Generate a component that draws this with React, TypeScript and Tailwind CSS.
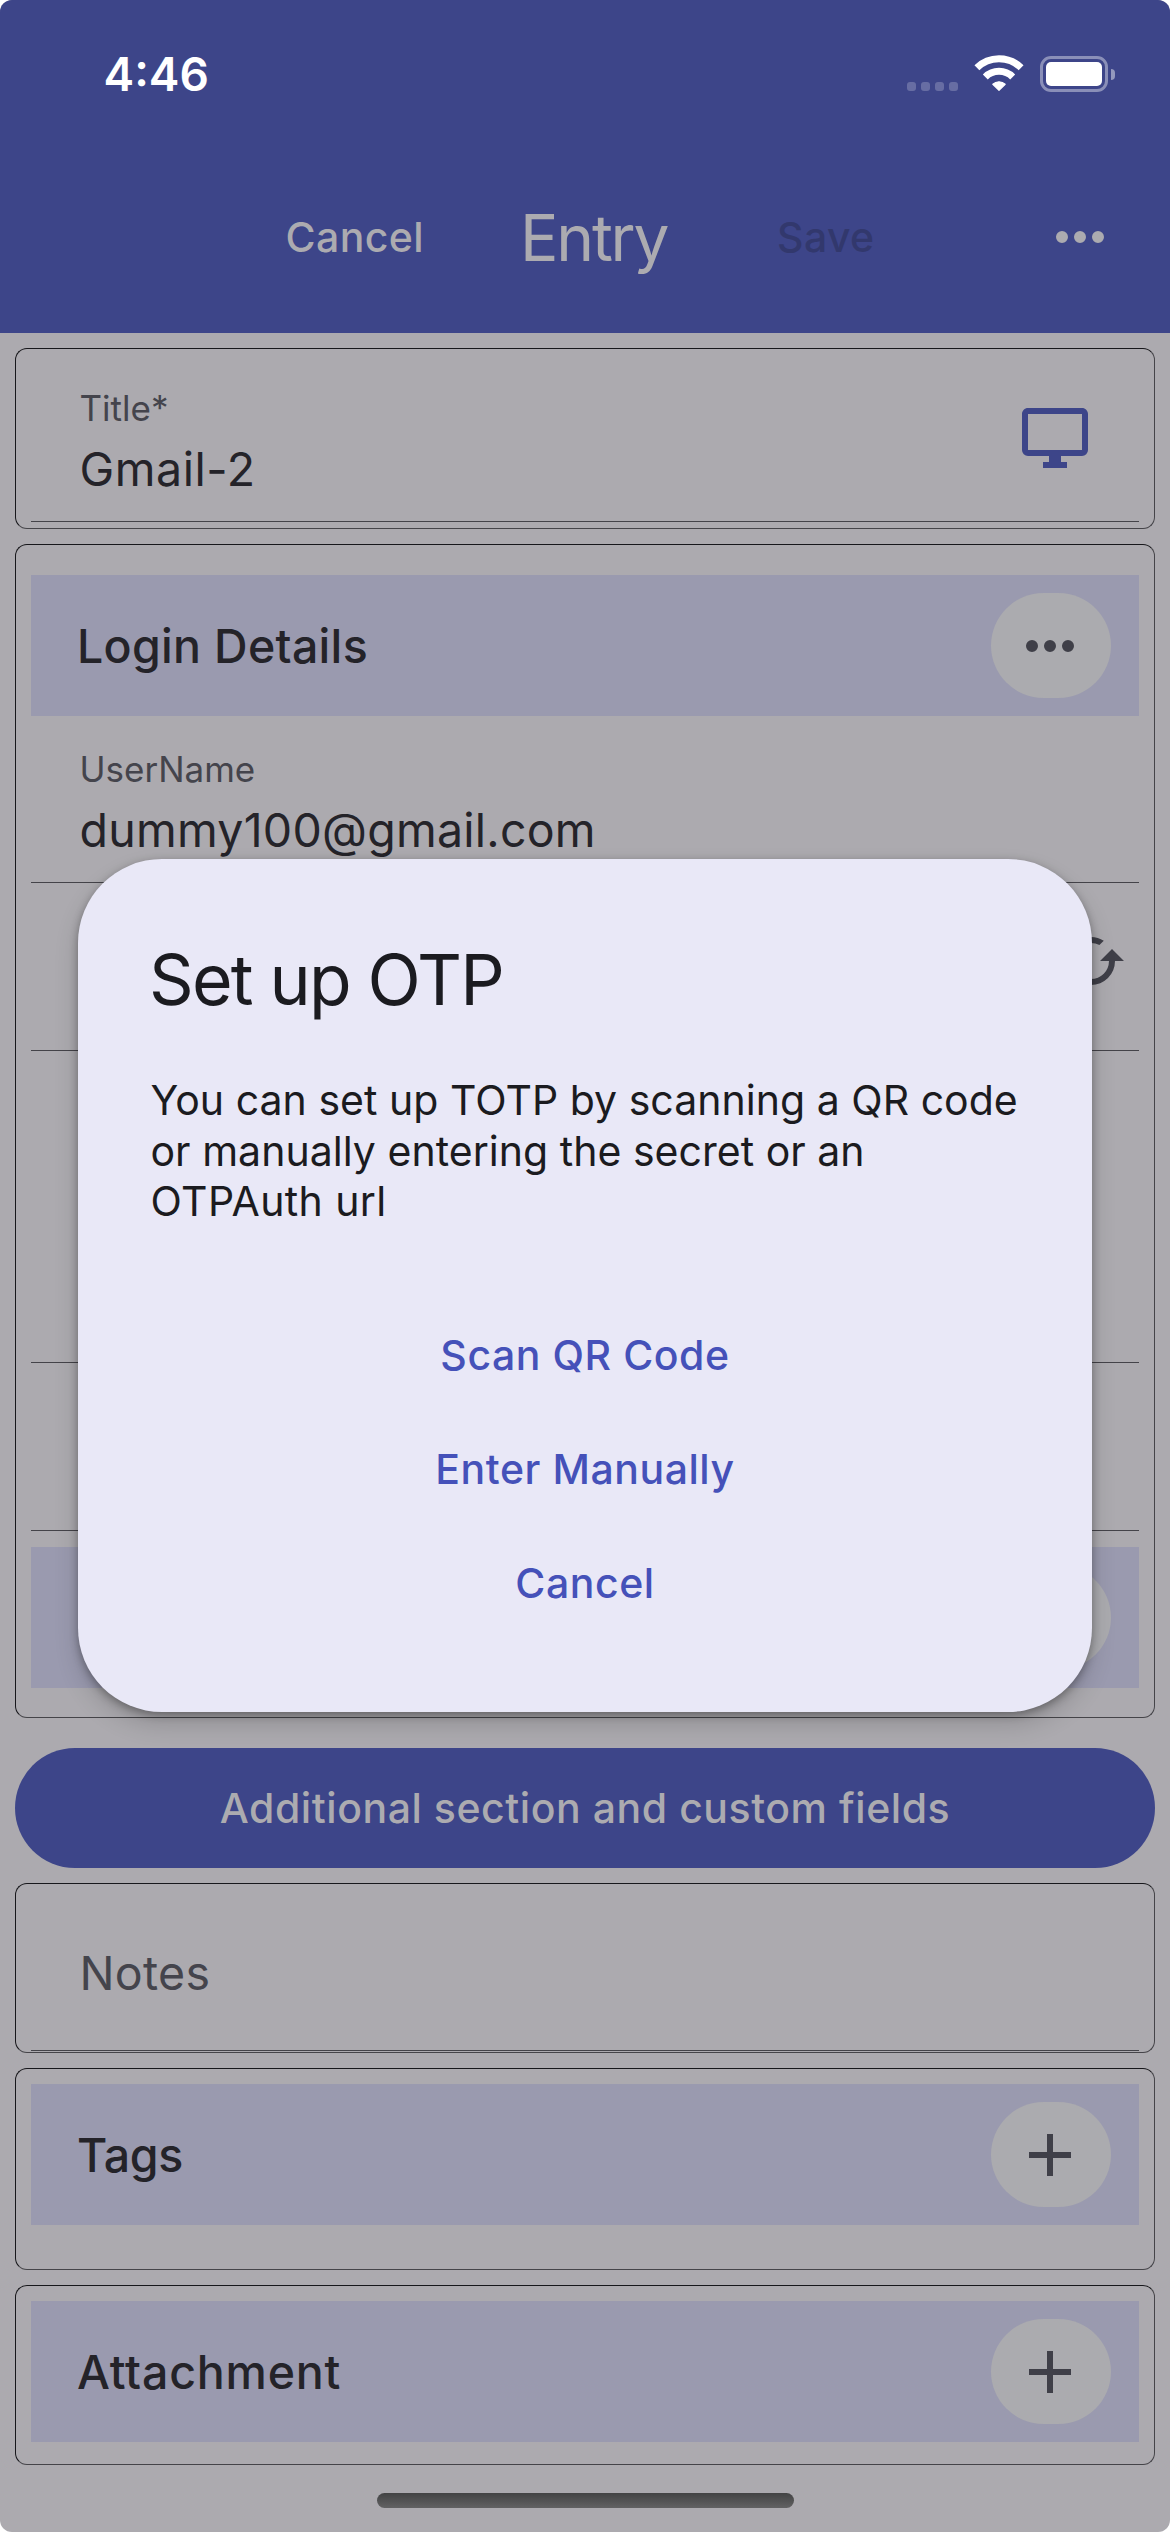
import type { ReactNode } from "react";

const PATHS = {
  dots: "M16,12A2,2 0 0,1 18,10A2,2 0 0,1 20,12A2,2 0 0,1 18,14A2,2 0 0,1 16,12M10,12A2,2 0 0,1 12,10A2,2 0 0,1 14,12A2,2 0 0,1 12,14A2,2 0 0,1 10,12M4,12A2,2 0 0,1 6,10A2,2 0 0,1 8,12A2,2 0 0,1 6,14A2,2 0 0,1 4,12Z",
  plus: "M19,13H13V19H11V13H5V11H11V5H13V11H19V13Z",
  monitor:
    "M21,16H3V4H21M21,2H3C1.89,2 1,2.89 1,4V16A2,2 0 0,0 3,18H10V20H8V22H16V20H14V18H21A2,2 0 0,0 23,16V4C23,2.89 22.1,2 21,2Z",
  cached:
    "M19,8L15,12H18A6,6 0 0,1 12,18C11,18 10.03,17.75 9.2,17.3L7.74,18.76C8.97,19.54 10.43,20 12,20A8,8 0 0,0 20,12H23M6,12A6,6 0 0,1 12,6C13,6 13.97,6.25 14.8,6.7L16.26,5.24C15.03,4.46 13.57,4 12,4A8,8 0 0,0 4,12H1L5,16L9,12",
};

function Icon({ name, className }: { name: keyof typeof PATHS; className: string }) {
  return (
    <svg viewBox="0 0 24 24" className={`size-[72px] shrink-0 ${className}`} fill="currentColor">
      <path d={PATHS[name]} />
    </svg>
  );
}

function StatusBar() {
  return (
    <div className="flex h-[141px] items-center pt-[7px] pr-[55px] pl-[103.5px] text-white">
      <span className="text-[46px] leading-[60px] font-semibold">4:46</span>
      <div className="ml-auto flex h-[38px] items-start">
        <div className="mt-[27px] mr-[17px] flex gap-[5px]">
          {[0, 1, 2, 3].map((i) => (
            <i key={i} className="size-[9px] rounded-[3px] bg-white/22" />
          ))}
        </div>
        <svg viewBox="0 0 48 36" className="mr-[17px] h-[36px] w-[48px] overflow-visible" fill="none" stroke="white">
          <path d="M1.9 12.7A31.6 31.6 0 0 1 46.1 12.7" strokeWidth="7" />
          <path d="M10.3 22A19.4 19.4 0 0 1 37.7 22" strokeWidth="7" />
          <path d="M17.8 29.2A9.2 9.2 0 0 1 30.2 29.2L24 35.3Z" fill="white" strokeWidth="1.2" strokeLinejoin="round" />
        </svg>
        <div className="mt-px h-[36px] w-[68px] rounded-[11px] border-[3px] border-white/40 p-[3px]">
          <div className="h-full w-full rounded-[5px] bg-white" />
        </div>
        <i className="mt-[14px] ml-[3px] h-[11px] w-[4px] rounded-r-full bg-white/45" />
      </div>
    </div>
  );
}

function Card({ children, className }: { children?: ReactNode; className: string }) {
  return (
    <section
      className={`rounded-[12px] border border-t-[#17171b] border-r-[#454449] border-b-[#454449] border-l-[#17171b] px-[15px] ${className}`}
    >
      {children}
    </section>
  );
}

function Field({
  label,
  value,
  icon,
  className,
}: {
  label: string;
  value: string;
  icon?: keyof typeof PATHS;
  className: string;
}) {
  return (
    <div className={`flex items-start justify-between border-b border-[#444349] pb-[22px] pl-[48.5px] ${className}`}>
      <div>
        <div className="text-[35px] leading-[48px] tracking-normal text-[#44444c]">{label}</div>
        <div className="mt-[7px] text-[46.5px] leading-[60px] text-[#242329]">{value}</div>
      </div>
      {icon && <Icon name={icon} className="mt-[18px] mr-[48px] text-[#3d4589]" />}
    </div>
  );
}

function SectionBand({ title, icon, className = "" }: { title?: string; icon?: "dots" | "plus"; className?: string }) {
  return (
    <div className={`flex h-[141px] items-center justify-between bg-[#9a9aaf] pr-[28px] pl-[46px] ${className}`}>
      <h2 className="text-[46.5px] leading-[60px] font-medium text-[#242329]">{title}</h2>
      <button className="flex h-[105px] w-[120px] items-center justify-center rounded-full bg-[#ababaf] pr-[2px]">
        {icon && <Icon name={icon} className="text-[#3f3f48]" />}
      </button>
    </div>
  );
}

function OtpDialog() {
  return (
    <div className="absolute top-[859px] left-[78px] flex h-[853px] w-[1014px] flex-col rounded-[84px] bg-[#e9e8f7] px-[72.5px] pt-[73px] text-[#1b1b20] shadow-[0_3px_9px_rgba(0,0,0,0.32),0_12px_24px_rgba(0,0,0,0.16)]">
      <h1 className="-ml-[1.5px] text-[69.7px] leading-[96px] tracking-[-1.8px]">Set up OTP</h1>
      <p className="mt-[47px] text-[41px] leading-[50.5px] tracking-[0.03px] whitespace-nowrap">
        You can set up TOTP by scanning a QR code
        <br />
        or manually entering the secret or an
        <br />
        <span className="tracking-[0.4px]">OTPAuth url</span>
      </p>
      <div className="mt-[71.5px] flex flex-col items-center text-[41px] font-medium tracking-[0.55px] text-[#4551b9]">
        {["Scan QR Code", "Enter Manually", "Cancel"].map((t) => (
          <button key={t} className="h-[114px] leading-[62px]">
            {t}
          </button>
        ))}
      </div>
    </div>
  );
}

export default function App() {
  return (
    <div className="h-[2532px] w-[1170px] bg-white font-['Inter',sans-serif]">
      <div className="relative h-full overflow-hidden rounded-[12px] bg-[#acaaaf]">
        <header className="h-[333px] bg-[#3d4589]">
          <StatusBar />
          <nav className="flex h-[192px] items-center text-[#acabb0]">
            <button className="ml-[285.5px] w-[139px] text-left text-[41px] leading-[62px] font-medium tracking-[0.4px]">
              Cancel
            </button>
            <h1 className="ml-[95.5px] w-[160px] pt-px text-[64px] leading-[91px] tracking-[-2.2px]">Entry</h1>
            <button className="ml-[97px] w-[100px] text-left text-[41px] leading-[62px] font-medium tracking-[0.4px] text-[#32386d]">
              Save
            </button>
            <Icon name="dots" className="ml-[167px]" />
          </nav>
        </header>

        <main className="flex flex-col gap-[15px] px-[15px] pt-[15px]">
          <Card className="h-[181px] tracking-[0.55px]">
            <Field label="Title*" value="Gmail-2" icon="monitor" className="h-[173px] pt-[35px]" />
          </Card>

          <Card className="h-[1174px] pt-[30px] tracking-[0.3px]">
            <SectionBand title="Login Details" icon="dots" />
            <Field label="UserName" value="dummy100@gmail.com" className="h-[167px] pt-[29px] tracking-[0.25px]" />
            <div className="flex h-[168px] items-start justify-end border-b border-[#444349] pt-[42px] pr-[12px]">
              <Icon name="cached" className="text-[#3f3f48]" />
            </div>
            <div className="h-[312px] border-b border-[#444349]" />
            <div className="h-[168px] border-b border-[#444349]" />
            <SectionBand className="mt-[16px]" />
          </Card>

          <button className="mt-[15px] h-[120px] rounded-full bg-[#3d4589] text-[41px] leading-[62px] font-medium tracking-[0.55px] text-[#acabb0]">
            Additional section and custom fields
          </button>

          <Card className="h-[170px]">
            <div className="h-[167px] border-b border-[#444349] pt-[59px] pl-[48.5px] text-[46.5px] leading-[60px] tracking-[0.3px] text-[#44444c]">
              Notes
            </div>
          </Card>

          <Card className="h-[202px] pt-[15px] tracking-[-0.3px]">
            <SectionBand title="Tags" icon="plus" />
          </Card>

          <Card className="h-[180px] pt-[15px] tracking-[0.8px]">
            <SectionBand title="Attachment" icon="plus" />
          </Card>
        </main>

        <div className="mt-[28px] ml-[377px] h-[15px] w-[417px] rounded-full bg-linear-to-b from-[#434344] to-[#626263]" />

        <OtpDialog />
      </div>
    </div>
  );
}
